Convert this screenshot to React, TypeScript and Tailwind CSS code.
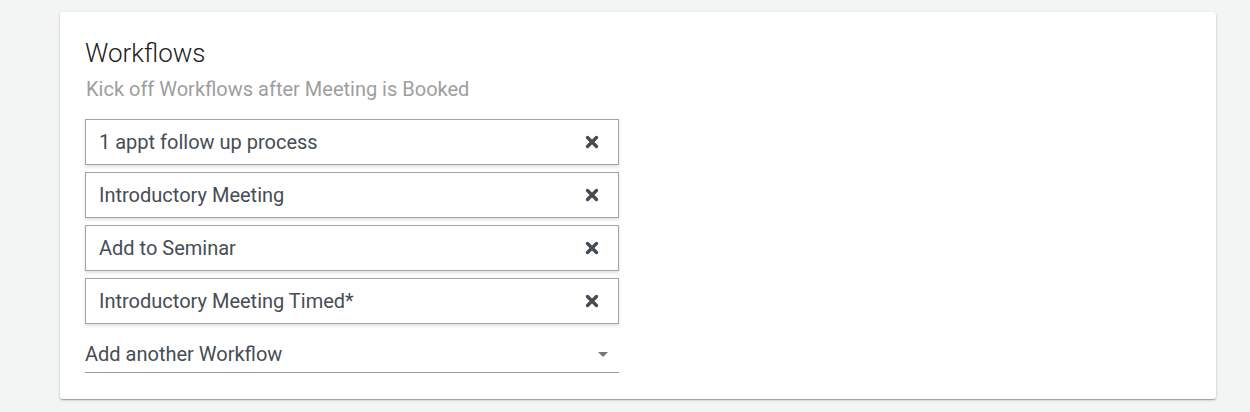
const workflows = [
  "1 appt follow up process",
  "Introductory Meeting",
  "Add to Seminar",
  "Introductory Meeting Timed*",
];

function TimesIcon() {
  return (
    <svg width="14" height="14" viewBox="0 0 14 14" className="text-[#454c54]">
      <path d="M2.5 2.5 L11.5 11.5 M11.5 2.5 L2.5 11.5" stroke="currentColor" strokeWidth="3.4" strokeLinecap="round" />
    </svg>
  );
}

export default function App() {
  return (
    <div className="min-h-screen bg-[#f3f4f4] pt-3 pl-[60px] pr-[34px]" style={{ fontFamily: "Roboto, 'Liberation Sans', sans-serif" }}>
      <div className="h-[387px] rounded-[3px] bg-white pl-[25px] pt-[25px] shadow-[0_1px_3px_rgba(0,0,0,0.2),0_1px_1px_rgba(0,0,0,0.14),0_2px_1px_-1px_rgba(0,0,0,0.12)]">
        <h2 className="text-[26px] leading-8 font-light text-[#212121]">Workflows</h2>
        <p className="mt-2 mb-[18px] pl-px text-[20px] leading-6 text-[#9e9e9e]">Kick off Workflows after Meeting is Booked</p>

        <div className="flex w-[534px] flex-col gap-[7px]">
          {workflows.map((name) => (
            <div
              key={name}
              className="flex h-[46px] items-center justify-between border border-[#a3a3a3] bg-white pl-[13px] pr-[19px] shadow-[0_2px_3px_rgba(0,0,0,0.12)]"
            >
              <span className="text-[20px] leading-6 text-[#464d55]">{name}</span>
              <TimesIcon />
            </div>
          ))}
        </div>

        <div className="mt-[7px] flex h-[42px] w-[534px] items-start justify-between border-b border-[#9e9e9e] pt-[11px]">
          <span className="text-[20px] leading-6 text-[#464d55]">Add another Workflow</span>
          <svg width="10" height="5" viewBox="0 0 10 5" className="mt-[10px] mr-[11px]">
            <path d="M0 0 L10 0 L5 5 Z" fill="#777" />
          </svg>
        </div>
      </div>
    </div>
  );
}
